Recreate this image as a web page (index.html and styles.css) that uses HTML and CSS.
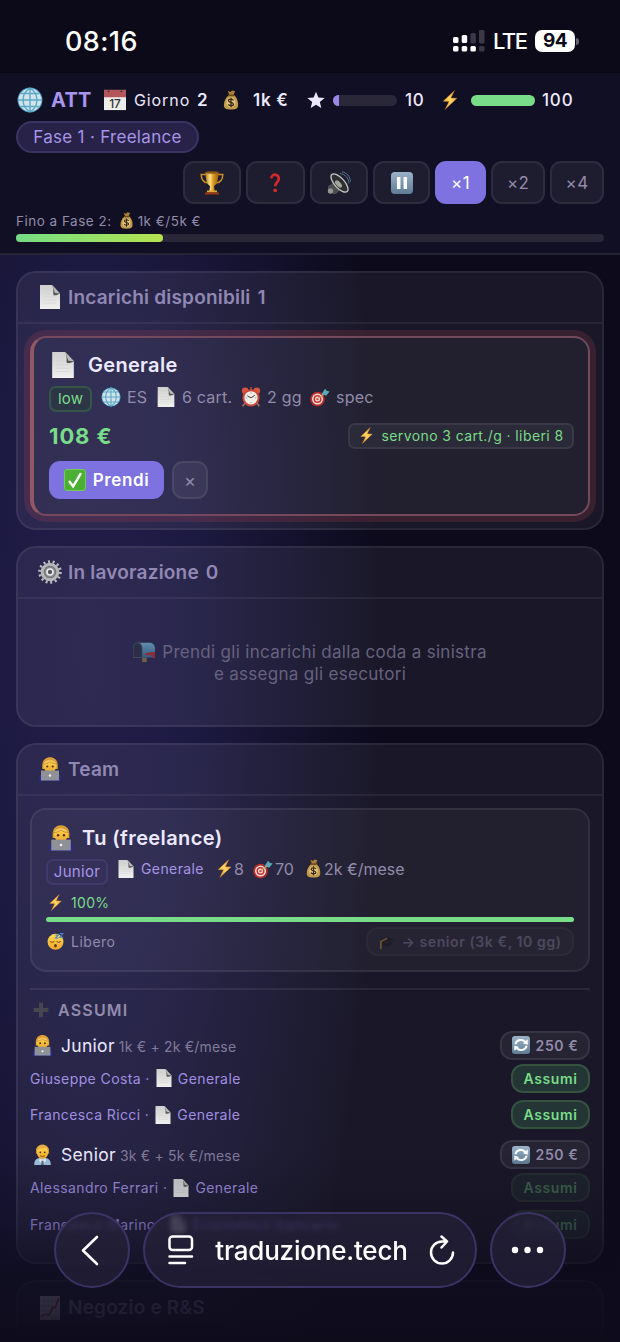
FILE: index.html
```html
<!DOCTYPE html>
<html lang="it">
<head>
    <title>ATT</title>
    <meta charset="UTF-8">
    <meta name="viewport" content="width=device-width, initial-scale=1">
    <link rel="stylesheet" href="styles.css">
</head>
<body>
<!-- Icons -->
<svg class="sprite" width="0" height="0">
    <defs>
        <linearGradient id="gold" x1="0" x2="1"><stop offset="0" stop-color="#b97a14"/><stop offset=".35" stop-color="#ffe08a"/><stop offset=".6" stop-color="#d99a1f"/><stop offset="1" stop-color="#9c5f0c"/></linearGradient>
        <linearGradient id="zap" x1="1" y1="0" x2="0" y2="1"><stop offset="0" stop-color="#f08a2c"/><stop offset=".5" stop-color="#ffd75e"/><stop offset="1" stop-color="#f0912e"/></linearGradient>
        <linearGradient id="paper" x1="0" y1="0" x2="0" y2="1"><stop offset="0" stop-color="#cfcfcf"/><stop offset="1" stop-color="#f0f0ee"/></linearGradient>
        <linearGradient id="steel" x1="0" y1="0" x2="0" y2="1"><stop offset="0" stop-color="#9bb3c9"/><stop offset="1" stop-color="#5f7c96"/></linearGradient>
        <linearGradient id="skin" x1="0" y1="0" x2="0" y2="1"><stop offset="0" stop-color="#ffdc55"/><stop offset="1" stop-color="#eda52c"/></linearGradient>
        <linearGradient id="box" x1="0" y1="0" x2="0" y2="1"><stop offset="0" stop-color="#84d0ec"/><stop offset="1" stop-color="#3c7ea6"/></linearGradient>
    </defs>
    <symbol id="globe" viewBox="0 0 24 24">
        <circle cx="12" cy="12" r="11.5" fill="#4b9fc4"/>
        <circle cx="12" cy="12" r="10.6" fill="#d3e3e8"/>
        <path d="M12 1v22M1 12h22M3.200 6h17.600M3.200 18h17.600M12 1C3.500 6 3.500 18 12 23M12 1c8.500 5 8.500 17 0 22" fill="none" stroke="#5aa9c9" stroke-width="1.300"/>
    </symbol>
    <symbol id="money" viewBox="0 0 18 24">
        <path d="M5 1l3 1.500L10.500.5 14 1.500 12 6H7z" fill="#a98035"/>
        <path d="M6.500 6h6c4.500 4 5 8.500 5 12 0 4-2 5.500-8.500 5.500S.5 22 .5 18c0-4 1.500-8 6-12z" fill="#c29a4b"/>
        <path d="M5.500 5.500h7.500v2H5.500z" fill="#6f4c1c"/>
        <ellipse cx="9" cy="15" rx="5.500" ry="6" fill="#e2c57c"/>
        <path d="M12 12.500c-1-2-6-2-6 .3 0 2.700 6 1.500 6 4.200 0 2.300-5 2.300-6.200.2M9 9.300v11.400" fill="none" stroke="#352716" stroke-width="1.500"/>
    </symbol>
    <symbol id="star" viewBox="0 0 24 24"><path d="M12 1l3.200 7.700 8.300.6-6.400 5.400 2 8.100L12 18.400l-7.100 4.400 2-8.100L.5 9.300l8.300-.6z" fill="#ece9ff"/></symbol>
    <symbol id="bolt" viewBox="0 0 18 24"><path d="M14.500.5L.8 13.500l7 .2L3 23.500 17.300 10l-7.200-.3z" fill="url(#zap)" stroke="#d9822b" stroke-width=".4"/></symbol>
    <symbol id="trophy" viewBox="0 0 24 24">
        <path d="M6 3.500H1.200c0 5 2 8 7 8.500M18 3.500h4.800c0 5-2 8-7 8.500" fill="none" stroke="#c98d27" stroke-width="1.500"/>
        <path d="M5.500 1h13c0 7-1.500 12.500-4.500 14l.6 5H9.400l.6-5C7 13.500 5.500 8 5.500 1z" fill="url(#gold)"/>
        <ellipse cx="12" cy="1.500" rx="6.500" ry="1.300" fill="#8d5a13"/>
        <path d="M7 19.500h10v2H7z" fill="#dca838"/><path d="M5 21.500h14v2H5z" fill="#9e3215"/>
    </symbol>
    <symbol id="question" viewBox="0 0 24 24"><path d="M7.500 6.500C8 0 17.500 1 16.500 7.500c-.5 3.500-4 3.500-4 8.500" fill="none" stroke="#cf2a2a" stroke-width="3.300"/><circle cx="12.200" cy="20.800" r="2.300" fill="#cf2a2a"/></symbol>
    <symbol id="speaker" viewBox="0 0 24 24">
        <path d="M1 15l5-3 7 7-4 4c-4 1-9-4-8-8z" fill="#4b4d50"/>
        <circle cx="3.500" cy="20" r="2.700" fill="#96968f"/>
        <ellipse cx="12.500" cy="12" rx="5" ry="11.500" transform="rotate(-42 12.500 12)" fill="#2d2f33" stroke="#c4c4c0" stroke-width="1.300"/>
        <ellipse cx="11.500" cy="13" rx="2.300" ry="4.500" transform="rotate(-42 11.500 13)" fill="#a3a29b"/>
        <path d="M13 2.500c5 .5 8.500 4.500 9 10M15 .8c5 1 8 4.500 8.500 9.700" fill="none" stroke="#537e8b" stroke-width="1"/>
    </symbol>
    <symbol id="pause" viewBox="0 0 24 24"><rect width="24" height="24" rx="4" fill="url(#steel)"/><path d="M6.500 5.500h3.800v13H6.500zM13.700 5.500h3.800v13h-3.800z" fill="#fff"/></symbol>
    <symbol id="page" viewBox="0 0 20 24"><path d="M0 0h12l8 8.500V24H0z" fill="url(#paper)"/><path d="M3 5h8M3 8h7M3 12h13M3 15h13M3 18h13" stroke="#cfcfcf" stroke-width=".5"/><path d="M12 0l8 8.500c-3 2-6 2-6.500 1.500C13 8 14 4 12 0z" fill="#555557"/><path d="M12 0l8 8.500-5-.5z" fill="#bababa"/></symbol>
    <symbol id="alarm" viewBox="0 0 24 24">
        <path d="M5 19l-3 4M19 19l3 4" stroke="#99716b" stroke-width="2"/>
        <circle cx="5" cy="4.500" r="4" fill="#d9553f"/><circle cx="19" cy="4.500" r="4" fill="#d9553f"/>
        <path d="M11 0h2v4h-2z" fill="#b04738"/>
        <circle cx="12" cy="13" r="10.300" fill="#c94a3b"/><circle cx="12" cy="13" r="8" fill="#f1eee6"/>
        <path d="M7.500 10.500L12 13l4.500-3" fill="none" stroke="#333" stroke-width="1.100"/>
        <path d="M12 6.500v1.500M12 18v1.500M5.500 13H7M17 13h1.500" stroke="#777" stroke-width=".8"/>
    </symbol>
    <symbol id="target" viewBox="0 0 24 24">
        <circle cx="9" cy="14.500" r="8.800" fill="#b82c2a"/><circle cx="9" cy="14.500" r="6.600" fill="#f0dedb"/><circle cx="9" cy="14.500" r="4.800" fill="#c53330"/><circle cx="9" cy="14.500" r="3" fill="#f0dedb"/><circle cx="9" cy="14.500" r="1.400" fill="#c53330"/>
        <path d="M9 14.500l10-8" stroke="#c9a46a" stroke-width="1.500"/><path d="M14 8.500l4-6.500 2 2.500 3.500.8-4 5.200z" fill="#5ba9b8"/>
    </symbol>
    <symbol id="check" viewBox="0 0 24 24"><rect width="24" height="24" rx="3.500" fill="#4caf35"/><rect x=".6" y=".6" width="22.800" height="22.800" rx="3" fill="none" stroke="#7fd464" stroke-width=".9"/><path d="M5.500 13l4.500 6L18.500 4.500" fill="none" stroke="#fff" stroke-width="2.600"/></symbol>
    <symbol id="gear" viewBox="0 0 24 24">
        <circle cx="12" cy="12" r="10.400" fill="none" stroke="#bcbcbc" stroke-width="2.800" stroke-dasharray="2 2.667"/>
        <circle cx="12" cy="12" r="7.800" fill="#707275" stroke="#b5b6b8" stroke-width="3"/>
        <circle cx="12" cy="12" r="5.500" fill="#85878a"/>
        <circle cx="12" cy="12" r="3" fill="#56585c" stroke="#eee" stroke-width="1.600"/>
    </symbol>
    <symbol id="mailbox" viewBox="0 0 24 24">
        <path d="M10 18h5v5h-5z" fill="#a8813f"/>
        <path d="M5.500 2H18c4 0 6 3 6 6v10H9z" fill="url(#box)"/>
        <path d="M0 18V8c0-8 10-8 10 0v10z" fill="#2b3440" stroke="#58707d" stroke-width=".8"/>
        <path d="M13 13.500l7-1.500h4v6.500h-3l-1-3-7 0z" fill="#c4352f"/>
    </symbol>
    <symbol id="coder" viewBox="0 0 24 24">
        <path d="M1.500 19c2-5 19-5 21 0v5h-21z" fill="#2b2b9e"/>
        <path d="M4.300 8c0-10.500 15.400-10.500 15.400 0v4H4.300z" fill="#e0a136"/>
        <ellipse cx="12" cy="8.800" rx="6.600" ry="6.600" fill="url(#skin)"/>
        <path d="M5 7C6 1.500 17 .5 19 7c-3-.2-5.500-1-7-2.300C10.500 6 8 7 5 7z" fill="#f3c65e" stroke="#b97a22" stroke-width=".6"/>
        <circle cx="9.300" cy="9.500" r="1.100" fill="#543415"/><circle cx="14.700" cy="9.500" r="1.100" fill="#543415"/>
        <path d="M3 13.500h18v10H3z" fill="#8e9196"/><circle cx="12" cy="18.500" r="1.200" fill="#f3f3f3"/>
    </symbol>
    <symbol id="office" viewBox="0 0 24 24">
        <path d="M2.500 24c0-6 3-7.500 6-8h7c3 .5 6 2 6 8z" fill="#9fc3df"/><path d="M9 16l3 2 3-2 1 3-4 5-4-5z" fill="#e8eef2"/><path d="M11 19h2l.7 5h-3.400z" fill="#56718c"/>
        <path d="M4.500 8c0-10 15-10 15 0v3h-15z" fill="#c7892a"/>
        <ellipse cx="12" cy="9.500" rx="6.500" ry="7.500" fill="url(#skin)"/>
        <path d="M4.800 8C5-1 19-1 19.200 8L17 4.700 8 5.500z" fill="#e6ad42"/>
        <circle cx="9.500" cy="9.500" r="1" fill="#543415"/><circle cx="14.500" cy="9.500" r="1" fill="#543415"/><path d="M9.500 13.500q2.500 1.500 5 0" fill="none" stroke="#7a4516"/>
    </symbol>
    <symbol id="sleep" viewBox="0 0 24 24"><circle cx="12" cy="12.500" r="11.300" fill="url(#skin)"/><path d="M4.500 12q3 2.500 6 0M13.500 12q3 2.500 6 0" fill="none" stroke="#6b3b12" stroke-width="1.300"/><ellipse cx="12" cy="18" rx="2" ry="2.500" fill="#6b3b12"/><path d="M12 3h4l-4 4h4M18 .8h4.500L18 6h5" fill="none" stroke="#3d83c9" stroke-width="1.500"/></symbol>
    <symbol id="cap" viewBox="0 0 24 24"><path d="M2 9l11-4 10 4-10 5zM6 12v5c3 3 9 3 13 0v-5" fill="#1b1a20"/><path d="M13 7.500l-9 4.500v11" fill="none" stroke="#d89b26" stroke-width="2.500"/></symbol>
    <symbol id="plus" viewBox="0 0 24 24"><path d="M9 1h6v8h8v6h-8v8H9v-8H1V9h8z" fill="#47464f"/></symbol>
    <symbol id="refresh" viewBox="0 0 24 24"><rect width="24" height="24" rx="4" fill="url(#steel)"/><path d="M4.500 11C6 4.500 14 3.500 18 8M19.500 13c-1.500 6.500-9.500 7.500-13.500 3" fill="none" stroke="#fff" stroke-width="2.600"/><path d="M21 4.500v7l-6.500-2zM3 19.500v-7l6.500 2z" fill="#fff"/></symbol>
    <symbol id="chart" viewBox="0 0 20 24"><path d="M0 0h20v24H0z" fill="#e2e2e8"/><path d="M4 0v24M8 0v24M12 0v24M16 0v24M0 5h20M0 10h20M0 15h20M0 20h20" stroke="#b4b4c4" stroke-width=".6"/><path d="M1 20l5-2 3 1 4-8 2 1 4-10" fill="none" stroke="#d23c50" stroke-width="1.600"/></symbol>
</svg>

<div class="statusbar">
    <div class="clock">08:16</div>
    <svg class="signal" viewBox="0 0 32 24"><g fill="#fff"><rect x="0" y="8" width="5.500" height="6" rx="1.500"/><rect x="8.700" y="6" width="5.500" height="8" rx="1.500"/><rect x="0" y="17" width="5.500" height="5.500" rx="1.500"/><rect x="8.700" y="17" width="5.500" height="5.500" rx="1.500"/><rect x="17.400" y="17" width="5.500" height="5.500" rx="1.500"/></g><g fill="#3b3947"><rect x="17.400" y="4" width="5.500" height="10.500" rx="1.500"/><rect x="26" y="1" width="5.500" height="13.500" rx="1.500"/><rect x="26" y="17" width="5.500" height="5.500" rx="1.500"/></g></svg>
    <div class="lte">LTE</div>
    <div class="battery">94</div>
    <i class="nub"></i>
</div>

<header class="topbar">
    <div class="stats">
        <svg class="i26"><use href="#globe"/></svg>
        <b class="brand">ATT</b>
        <svg class="i22" viewBox="0 0 24 24">
            <path d="M0 1h24v22H0z" fill="#ecece8"/><path d="M0 1h24v8H0z" fill="#b4575a"/>
            <circle cx="5" cy="2.500" r="1" fill="#49272c"/><circle cx="19" cy="2.500" r="1" fill="#49272c"/>
            <text x="12" y="20.500" text-anchor="middle" class="cal-day">17</text>
        </svg>
        <span class="day">Giorno</span><b>2</b>
        <svg class="i20"><use href="#money"/></svg>
        <b class="cash">1k €</b>
        <svg class="i18"><use href="#star"/></svg>
        <div class="meter"><i class="rep" style="width:10%"></i></div>
        <span class="mid">10</span>
        <svg class="i20"><use href="#bolt"/></svg>
        <div class="meter"><i class="energy" style="width:100%"></i></div>
        <span class="mid">100</span>
    </div>
    <div class="phase">Fase 1 · Freelance</div>
    <div class="controls">
        <button class="btn"><svg class="i24"><use href="#trophy"/></svg></button>
        <button class="btn"><svg class="i20"><use href="#question"/></svg></button>
        <button class="btn"><svg class="i24"><use href="#speaker"/></svg></button>
        <button class="btn"><svg class="i22"><use href="#pause"/></svg></button>
        <button class="btn on">×1</button>
        <button class="btn">×2</button>
        <button class="btn">×4</button>
    </div>
    <div class="goal"><span>Fino a Fase 2:</span><svg class="i17"><use href="#money"/></svg><span>1k €/5k €</span></div>
    <div class="progress"><i style="width:25%"></i></div>
</header>

<main>
    <section class="panel jobs">
        <h2><svg class="i24"><use href="#page"/></svg><span>Incarichi disponibili</span><span>1</span></h2>
        <div class="job">
            <h3><svg class="i26"><use href="#page"/></svg>Generale</h3>
            <div class="meta jobmeta">
                <span class="tag low">low</span>
                <svg class="i20"><use href="#globe"/></svg><span>ES</span>
                <svg class="i20"><use href="#page"/></svg><span>6 cart.</span>
                <svg class="i20"><use href="#alarm"/></svg><span>2 gg</span>
                <svg class="i20"><use href="#target"/></svg><span>spec</span>
            </div>
            <div class="pay">
                <b>108 €</b>
                <span class="need"><svg class="i17"><use href="#bolt"/></svg>servono 3 cart./g · liberi 8</span>
            </div>
            <div class="actions">
                <button class="take"><svg class="i22"><use href="#check"/></svg>Prendi</button>
                <button class="drop">×</button>
            </div>
        </div>
    </section>

    <section class="panel work">
        <h2><svg class="i24"><use href="#gear"/></svg><span>In lavorazione</span><span>0</span></h2>
        <div class="empty">
            <div class="line"><svg class="i22"><use href="#mailbox"/></svg>Prendi gli incarichi dalla coda a sinistra</div>
            <div class="line">e assegna gli esecutori</div>
        </div>
    </section>

    <section class="panel team">
        <h2><svg class="i24"><use href="#coder"/></svg><span>Team</span></h2>
        <div class="member">
            <h3><svg class="i26"><use href="#coder"/></svg>Tu (freelance)</h3>
            <div class="meta teammeta">
                <span class="tag">Junior</span>
                <svg class="i18"><use href="#page"/></svg><span class="lang">Generale</span>
                <svg class="i19"><use href="#bolt"/></svg><span>8</span>
                <svg class="i20"><use href="#target"/></svg><span>70</span>
                <svg class="i19"><use href="#money"/></svg><span>2k €/mese</span>
            </div>
            <div class="stamina"><svg class="i17"><use href="#bolt"/></svg>100%</div>
            <div class="bar"></div>
            <div class="state">
                <svg class="i17"><use href="#sleep"/></svg>Libero
                <button class="pill off"><svg class="i17"><use href="#cap"/></svg>→ senior (3k €, 10 gg)</button>
            </div>
        </div>
        <div class="hire">
            <h4><svg class="i16"><use href="#plus"/></svg>ASSUMI</h4>
            <div class="role"><svg class="i21"><use href="#coder"/></svg>Junior<small>1k € + 2k €/mese</small><button class="pill"><svg class="i18"><use href="#refresh"/></svg>250 €</button></div>
            <div class="person"><span>Giuseppe Costa ·</span><svg class="i18"><use href="#page"/></svg><span>Generale</span><button class="pill go">Assumi</button></div>
            <div class="person"><span>Francesca Ricci ·</span><svg class="i18"><use href="#page"/></svg><span>Generale</span><button class="pill go">Assumi</button></div>
            <div class="role"><svg class="i21"><use href="#office"/></svg>Senior<small>3k € + 5k €/mese</small><button class="pill"><svg class="i18"><use href="#refresh"/></svg>250 €</button></div>
            <div class="person"><span>Alessandro Ferrari ·</span><svg class="i18"><use href="#page"/></svg><span>Generale</span><button class="pill go off">Assumi</button></div>
            <div class="person"><span>Francesco Marino ·</span><svg class="i18"><use href="#page"/></svg><span class="wide">Economico bancario</span><button class="pill go off">Assumi</button></div>
        </div>
    </section>

    <section class="panel shop">
        <h2><svg class="i24"><use href="#chart"/></svg><span>Negozio e R&amp;S</span></h2>
    </section>
</main>

<!-- Browser toolbar -->
<nav class="browser">
    <div class="glass round"><svg width="76" height="76" viewBox="0 0 76 76"><path d="M43 25L29 38.500 43 52" fill="none" stroke="#fff" stroke-width="2.600" stroke-linecap="round" stroke-linejoin="round"/></svg></div>
    <div class="glass address">
        <svg class="reader" viewBox="0 0 26 30" fill="none" stroke="#fff" stroke-width="2.500" stroke-linecap="round"><rect x="1.500" y="1.500" width="22.500" height="13.500" rx="3"/><path d="M1.500 21.500h22.500M1.500 28h15.500"/></svg>
        <span>traduzione.tech</span>
        <svg class="reload" viewBox="0 0 26 30" fill="none" stroke="#fff" stroke-width="2.500" stroke-linecap="round" stroke-linejoin="round"><path d="M24 17.500A11 11 0 1 1 13 6.500h4M12.500 1.500l5.500 5-5.500 6"/></svg>
    </div>
    <div class="glass round"><svg width="76" height="76" viewBox="0 0 76 76" fill="#fff"><circle cx="25" cy="38" r="3.200"/><circle cx="37.500" cy="38" r="3.200"/><circle cx="50" cy="38" r="3.200"/></svg></div>
</nav>
</body>
</html>
```

FILE: styles.css
```css
*{
	box-sizing: border-box;
}
body{
	margin: 0;
	height: 1342px;
	overflow: hidden;
	position: relative;
	font-family: Inter, "Liberation Sans", sans-serif;
	font-size: 16px;
	letter-spacing: 0.3px;
	color: #ece9ff;
	background: radial-gradient(ellipse 290px 1050px at 90px 650px, #211d48 0%, #1d1a42 35%, #0c0a1b 100%) #0c0a1b;
}
h2, h3, h4{
	margin: 0;
	font-weight: 600;
}
b{
	font-weight: 600;
}
button{
	font: inherit;
	letter-spacing: inherit;
	color: #928bab;
	padding: 0;
	display: flex;
	align-items: center;
	justify-content: center;
	background: rgba(255,255,255,0.055);
	border: 2px solid rgba(255,255,255,0.07);
}
svg{
	display: block;
	flex: none;
}
.sprite{
	position: absolute;
}
.cal-day{
	font: 500 13px Inter, sans-serif;
	letter-spacing: 0;
	fill: #333;
}
.i16{ width: 16px; height: 16px; }
.i17{ width: 17px; height: 17px; }
.i18{ width: 18px; height: 18px; }
.i19{ width: 19px; height: 19px; }
.i20{ width: 20px; height: 20px; }
.i21{ width: 21px; height: 21px; }
.i22{ width: 22px; height: 22px; }
.i24{ width: 24px; height: 24px; }
.i26{ width: 26px; height: 26px; }

/* Status bar */
.statusbar{
	height: 73px;
	padding: 9px 41px 0 65px;
	display: flex;
	align-items: center;
	background: #0c0a18;
	color: #fff;
}
.clock{
	flex: 1;
	font-size: 27px;
	font-weight: 550;
	letter-spacing: 0.4px;
}
.signal{
	width: 32px;
	height: 24px;
	margin-right: 8px;
}
.lte{
	width: 42px;
	font-size: 22px;
	font-weight: 500;
	letter-spacing: -1.500px;
}
.battery{
	width: 40px;
	height: 22px;
	border-radius: 7px;
	background: #fff;
	color: #0c0a18;
	font-size: 19px;
	line-height: 22px;
	font-weight: 650;
	letter-spacing: -0.5px;
	text-align: center;
}
.nub{
	width: 3px;
	height: 7px;
	margin-left: 1px;
	border-radius: 0 4px 4px 0;
	background: #64626e;
}

/* Header */
.topbar{
	height: 182px;
	padding: 12px 16px 0;
	background: #110f23;
	border-bottom: 2px solid #252335;
}
.stats{
	height: 30px;
	display: grid;
	grid-template-columns: 34px 53px 30px 63px 24px 32px 54px 26px 72px 35px 31px 71px 40px;
	align-items: center;
	white-space: nowrap;
	padding-left: 1px;
}
.stats b, .mid{
	font-size: 17px;
}
.stats .brand{
	font-size: 20px;
	font-weight: 700;
	color: #a995ed;
}
.stats .cash{
	letter-spacing: 0.7px;
}
.day{
	letter-spacing: 0.9px;
}
.mid{
	font-weight: 500;
	letter-spacing: 0.8px;
}
.meter{
	width: 64px;
	height: 11px;
	border-radius: 6px;
	overflow: hidden;
	background: #292738;
}
.meter i{
	display: block;
	height: 11px;
}
.rep{ background: #9b87e6; }
.energy{ background: #79dc88; }
.phase{
	width: 183px;
	height: 32px;
	margin-top: 6px;
	border: 2px solid #3a3463;
	border-radius: 16px;
	background: #282249;
	color: #a795e7;
	line-height: 28px;
	text-align: center;
	font-size: 17px;
}
.controls{
	margin-top: 8px;
	display: grid;
	grid-template-columns: 58.500px 58.500px 58.500px 57px 51px 54px 54px;
	column-gap: 5px;
	justify-content: end;
}
.btn{
	height: 43px;
	border-radius: 11px;
	font-size: 17px;
}
.btn.on{
	background: #7d72df;
	border-color: #7d72df;
	color: #fff;
}
.goal{
	height: 17px;
	margin-top: 8px;
	display: flex;
	align-items: center;
	font-size: 13.500px;
	letter-spacing: 0.5px;
	color: #928bab;
}
.goal svg{
	margin: 0 3px 0 6px;
}
.progress{
	height: 8px;
	margin-top: 5px;
	border-radius: 4px;
	background: #292738;
}
.progress i{
	display: block;
	height: 8px;
	border-radius: 4px;
	background: linear-gradient(90deg, #74dc86, #b4e34e);
}

/* Panels */
main{
	padding: 15.500px 16px 0;
}
.panel{
	margin-bottom: 16px;
	border: 2px solid rgba(255,255,255,0.065);
	border-radius: 20px;
	background: rgba(255,255,255,0.06);
}
.panel h2{
	height: 51px;
	padding: 0 0 0 20px;
	display: flex;
	align-items: center;
	border-bottom: 2px solid rgba(255,255,255,0.06);
	font-size: 19px;
	letter-spacing: 0.2px;
	color: #9188b4;
}
.panel h2 svg{
	margin-right: 6px;
}
.panel h2 span + span{
	margin-left: 7px;
}
h3{
	display: flex;
	align-items: center;
	font-size: 20px;
}
.jobs{
	height: 259px;
}
.job{
	height: 180px;
	margin: 12px 12px 0;
	padding: 13px 14px 0 15px;
	border: 2px solid #75495c;
	border-left: 4px solid #925762;
	border-radius: 16px;
	background: rgba(255,255,255,0.035);
	box-shadow: 0 0 0 6px rgba(220,80,90,0.16);
}
.job h3{
	height: 28px;
}
.job h3 svg{
	margin: 0 12px 0 1px;
}
.meta{
	display: grid;
	align-items: center;
	white-space: nowrap;
	color: #928bab;
}
.jobmeta{
	height: 28px;
	margin-top: 5px;
	grid-template-columns: 52px 26px 29px 26px 59px 26px 43px 26px 50px;
	padding-bottom: 6px;
	letter-spacing: 0.2px;
}
.tag{
	position: relative;
	top: 2px;
	height: 26px;
	line-height: 22px;
	text-align: center;
	font-size: 15px;
	border: 2px solid #403969;
	border-radius: 7px;
	background: #343058;
	color: #a795e7;
}
.jobmeta .tag{ width: 43px; }
.low{
	color: #79dc88;
	background: #2d3646;
	border-color: #365648;
}
.pay{
	height: 30px;
	margin-top: 9px;
	display: flex;
	justify-content: space-between;
	align-items: center;
}
.pay b{
	font-size: 22px;
	font-weight: 700;
	letter-spacing: 0.9px;
	color: #79dc88;
}
.need{
	width: 226px;
	height: 26px;
	display: flex;
	align-items: center;
	justify-content: center;
	border: 2px solid #3a3846;
	border-radius: 7px;
	background: #2b2a38;
	color: #79dc88;
	font-size: 14px;
	letter-spacing: 0.4px;
	white-space: nowrap;
}
.need svg{
	margin-right: 6px;
}
.actions{
	display: flex;
	gap: 8px;
	margin-top: 10.500px;
}
.take{
	width: 115px;
	height: 38px;
	border: 0;
	border-radius: 11px;
	background: #7d72df;
	color: #fff;
	font-weight: 600;
	font-size: 17px;
	letter-spacing: 0.6px;
}
.take svg{
	margin-right: 7px;
}
.drop{
	width: 36px;
	border-radius: 11px;
	font-size: 18px;
}

.work{
	height: 181px;
}
.empty{
	padding-top: 42px;
	font-size: 17px;
	line-height: 22px;
	color: #67627e;
}
.line{
	height: 22px;
	display: flex;
	align-items: center;
	justify-content: center;
}
.line svg{
	margin-right: 7px;
	opacity: 0.6;
}

.team{
	height: 521px;
}
.member{
	height: 164px;
	margin: 12px 12px 0;
	padding: 14px 14px 0;
	border: 2px solid rgba(255,255,255,0.07);
	border-radius: 16px;
	background: rgba(255,255,255,0.035);
}
.member h3{
	height: 28px;
	padding-left: 2px;
	letter-spacing: 0.4px;
}
.member h3 svg{
	margin-right: 8px;
}
.teammeta{
	height: 28px;
	margin-top: 4px;
	padding-bottom: 5px;
	grid-template-columns: 71px 24px 74px 19px 19px 22px 29px 20px 90px;
	letter-spacing: 0;
}
.teammeta .tag{
	width: 62px;
	top: 3px;
	letter-spacing: 0.3px;
}
.lang{
	font-size: 14px;
	letter-spacing: 0.4px;
	color: #a795e7;
}
.stamina, .state{
	display: flex;
	align-items: center;
	font-size: 14px;
	color: #79dc88;
	padding-left: 1px;
}
.stamina{
	height: 24px;
	margin-top: 7px;
}
.stamina svg, .state > svg{
	margin-right: 7px;
}
.bar{
	height: 5px;
	margin: 2px 0 5px;
	border-radius: 3px;
	background: #79dc88;
}
.state{
	color: #928bab;
	letter-spacing: 0.5px;
}
.pill{
	height: 29px;
	width: 90px;
	margin-left: auto;
	border-radius: 12px;
	font-size: 14px;
	font-weight: 600;
	letter-spacing: 0.6px;
	white-space: nowrap;
}
.pill svg{
	margin-right: 6px;
}
.state .pill{
	width: 208px;
}
.off{
	opacity: 0.38;
}
.go{
	width: 79px;
	color: #79dc88;
	background: #243536;
	border-color: #35523f;
}
.hire{
	margin: 16px 12px 0;
	border-top: 2px solid rgba(255,255,255,0.07);
}
h4{
	height: 41px;
	padding-left: 3px;
	display: flex;
	align-items: center;
	font-size: 16px;
	letter-spacing: 1.200px;
	color: #928bab;
}
h4 svg{
	margin-right: 9px;
}
.role{
	height: 33px;
	display: flex;
	align-items: center;
	font-size: 17.500px;
	padding-left: 2px;
	padding-bottom: 4px;
}
.role > svg{
	margin-right: 8px;
}
.role small{
	font-size: 14px;
	letter-spacing: 0.2px;
	margin: 2px 0 0 4px;
	color: #817a9a;
}
.person{
	height: 29px;
	margin-bottom: 7.500px;
	display: flex;
	align-items: center;
	font-size: 14px;
	letter-spacing: 0.4px;
	color: #a08fe0;
}
.person + .role{
	margin-top: 11px;
}
.person > svg{
	margin: 0 5px;
}
.wide{
	letter-spacing: 0.6px;
	color: #a58fff;
}
.shop{
	height: 80px;
	background: rgba(255,255,255,0.03);
}
.shop h2{
	padding-top: 3px;
	opacity: 0.8;
}

/* Browser toolbar */
.browser{
	position: absolute;
	left: 0;
	right: 0;
	bottom: 0;
	height: 190px;
	padding: 60px 54px 0;
	display: flex;
	gap: 13px;
	background: linear-gradient(rgba(14,12,28,0), rgba(14,12,28,0.3) 38%, rgba(14,12,28,0.78) 66%, rgba(14,12,28,0.84) 85%, #0e0c1b);
}
.glass{
	height: 76px;
	border: 2px solid #3c3365;
	border-radius: 38px;
	background: rgba(36,32,56,0.74);
	backdrop-filter: blur(2.500px);
	color: #fff;
}
.round{
	width: 76px;
	display: flex;
	align-items: center;
	justify-content: center;
}
.address{
	width: 334px;
	padding: 0 20px 0 23px;
	display: flex;
	align-items: center;
	justify-content: space-between;
	font-size: 26px;
	font-weight: 500;
	letter-spacing: -0.2px;
}
.reader, .reload{
	width: 26px;
	height: 30px;
}
```
